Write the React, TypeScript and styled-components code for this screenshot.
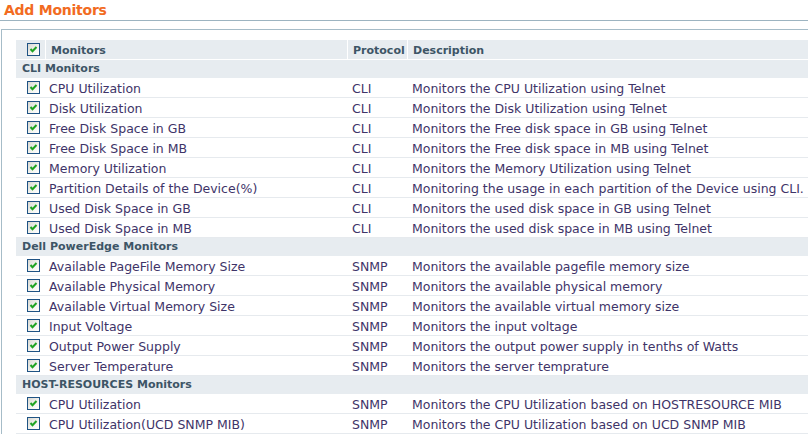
import React from "react";
import styled, { createGlobalStyle } from "styled-components";

const GlobalStyle = createGlobalStyle`
  html, body { margin: 0; padding: 0; background: #fff; overflow: hidden; }
  body { font-family: "DejaVu Sans", Verdana, sans-serif; }
`;

const Page = styled.div`
  width: 808px;
  height: 436px;
  overflow: hidden;
`;

const Title = styled.div`
  height: 21px;
  box-sizing: border-box;
  padding: 2px 0 0 4px;
  border-bottom: 1px solid #9db4c1;
  color: #f26b21;
  font-weight: bold;
  font-size: 14px;
  letter-spacing: -0.25px;
  line-height: 17px;
`;

const Panel = styled.div`
  margin: 8px 0 0 1px;
  width: 840px;
  border-top: 1px solid #a6bcc8;
  border-left: 1px solid #a6bcc8;
  padding: 10px 0 0 14px;
`;

const Table = styled.div`
  display: flex;
  flex-direction: column;
`;

const HeaderRow = styled.div`
  display: grid;
  grid-template-columns: 29px 1px 301px 1px 59px 1px 1fr;
  height: 19px;
  background: #e7ecf0;
  border-bottom: 1px solid #fff;
  align-items: center;
`;

const Divider = styled.div`
  align-self: stretch;
  background: #fff;
`;

const HeadCell = styled.div`
  padding: 1px 0 0 5px;
  font-size: 11px;
  font-weight: bold;
  color: #3d5566;
  white-space: nowrap;
`;

const CheckCell = styled.div`
  display: flex;
  align-items: center;
  padding-left: 11px;
`;

const GroupRow = styled.div`
  height: 18px;
  background: #e7ecf0;
  padding-left: 6px;
  font-size: 11px;
  font-weight: bold;
  color: #3d5566;
  line-height: 18px;
`;

const DataRow = styled.div`
  display: grid;
  grid-template-columns: 30px 303px 60px 1fr;
  height: 19px;
  border-bottom: 1px solid #e6eaee;
  align-items: center;
`;

const DataCell = styled.div`
  padding: 1px 0 0 3px;
  font-size: 12.5px;
  color: #3e3468;
  white-space: nowrap;
`;

const Box = styled.span`
  display: inline-flex;
  width: 13px;
  height: 13px;
  box-sizing: border-box;
  border: 1px solid #1f5384;
  background: linear-gradient(135deg, #d8d8d2 0%, #f4f4f0 60%, #ffffff 100%);
  align-items: center;
  justify-content: center;
`;

const Check = () => (
  <Box>
    <svg width="11" height="11" viewBox="0 0 11 11">
      <polyline points="2.5,5 4.5,7.2 8.5,3" fill="none" stroke="#1fa323" strokeWidth="2" />
    </svg>
  </Box>
);

type Mon = [string, string, string];
const groups: { name: string; rows: Mon[] }[] = [
  {
    name: "CLI Monitors",
    rows: [
      ["CPU Utilization", "CLI", "Monitors the CPU Utilization using Telnet"],
      ["Disk Utilization", "CLI", "Monitors the Disk Utilization using Telnet"],
      ["Free Disk Space in GB", "CLI", "Monitors the Free disk space in GB using Telnet"],
      ["Free Disk Space in MB", "CLI", "Monitors the Free disk space in MB using Telnet"],
      ["Memory Utilization", "CLI", "Monitors the Memory Utilization using Telnet"],
      ["Partition Details of the Device(%)", "CLI", "Monitoring the usage in each partition of the Device using CLI."],
      ["Used Disk Space in GB", "CLI", "Monitors the used disk space in GB using Telnet"],
      ["Used Disk Space in MB", "CLI", "Monitors the used disk space in MB using Telnet"],
    ],
  },
  {
    name: "Dell PowerEdge Monitors",
    rows: [
      ["Available PageFile Memory Size", "SNMP", "Monitors the available pagefile memory size"],
      ["Available Physical Memory", "SNMP", "Monitors the available physical memory"],
      ["Available Virtual Memory Size", "SNMP", "Monitors the available virtual memory size"],
      ["Input Voltage", "SNMP", "Monitors the input voltage"],
      ["Output Power Supply", "SNMP", "Monitors the output power supply in tenths of Watts"],
      ["Server Temperature", "SNMP", "Monitors the server temprature"],
    ],
  },
  {
    name: "HOST-RESOURCES Monitors",
    rows: [
      ["CPU Utilization", "SNMP", "Monitors the CPU Utilization based on HOSTRESOURCE MIB"],
      ["CPU Utilization(UCD SNMP MIB)", "SNMP", "Monitors the CPU Utilization based on UCD SNMP MIB"],
    ],
  },
];

export default function App() {
  return (
    <Page>
      <GlobalStyle />
      <Title>Add Monitors</Title>
      <Panel>
        <Table>
          <HeaderRow>
            <CheckCell>
              <Check />
            </CheckCell>
            <Divider />
            <HeadCell>Monitors</HeadCell>
            <Divider />
            <HeadCell>Protocol</HeadCell>
            <Divider />
            <HeadCell>Description</HeadCell>
          </HeaderRow>
          {groups.map((g) => (
            <React.Fragment key={g.name}>
              <GroupRow>{g.name}</GroupRow>
              {g.rows.map((r) => (
                <DataRow key={g.name + r[0]}>
                  <CheckCell>
                    <Check />
                  </CheckCell>
                  <DataCell>{r[0]}</DataCell>
                  <DataCell>{r[1]}</DataCell>
                  <DataCell>{r[2]}</DataCell>
                </DataRow>
              ))}
            </React.Fragment>
          ))}
        </Table>
      </Panel>
    </Page>
  );
}
